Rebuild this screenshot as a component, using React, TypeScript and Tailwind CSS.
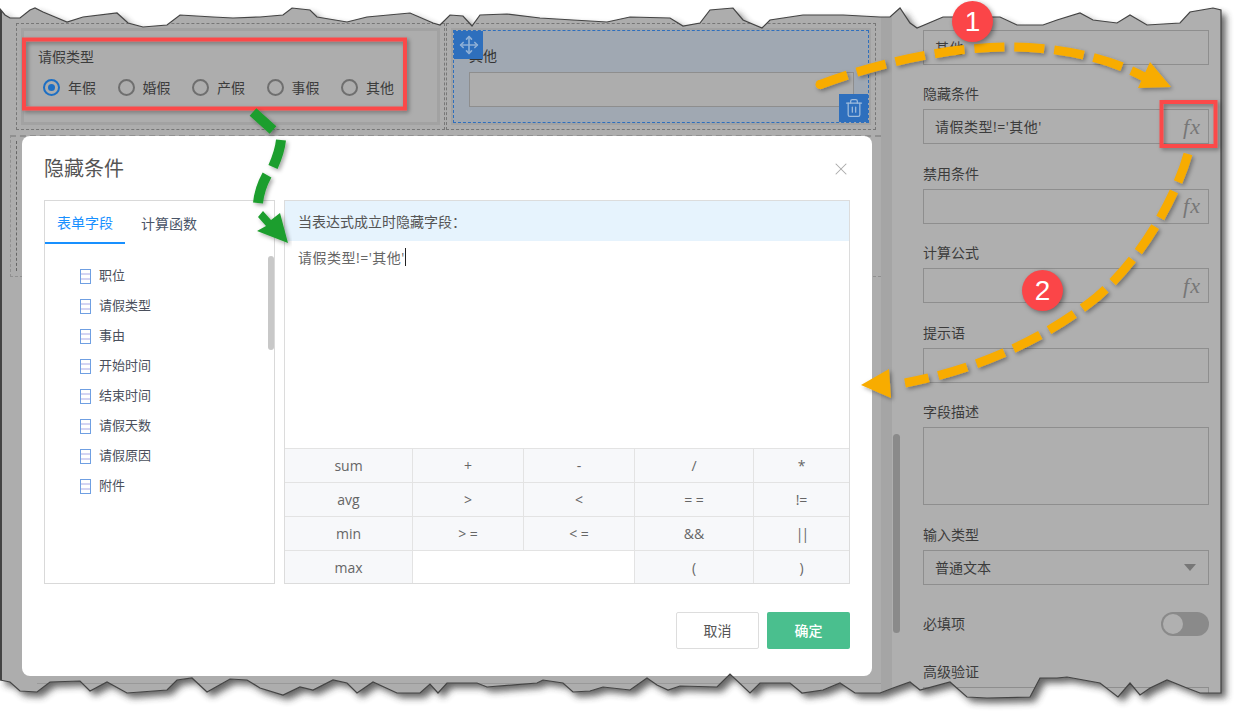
import React from 'react';
import { Move, Trash2, X } from 'lucide-react';

const radios = ['年假', '婚假', '产假', '事假', '其他'];
const fields = ['职位', '请假类型', '事由', '开始时间', '结束时间', '请假天数', '请假原因', '附件'];
const keys = [
  ['sum', '+', '-', '/', '*'],
  ['avg', '>', '<', '= =', '!='],
  ['min', '> =', '< =', '&&', '||'],
  ['max', '', '', '(', ')'],
];

// torn paper outline, traced from the picture
const edge =
  'M0 9 L5 15 L10 18 L20 18 L30 10 L35 8 L43 12 L55 17 L67 22 L83 17 L117 13 L128 23 L143 27 L167 25 L180 15 L213 17 L233 18 L260 17 L283 15 L292 8 L310 10 L317 17 L347 22 L367 17 L410 13 L433 23 L440 25 L450 15 L463 16 L472 26 L480 15 L507 14 L540 18 L573 20 L607 22 L630 17 L670 18 L683 26 L700 23 L710 10 L733 8 L743 20 L762 28 L770 20 L803 15 L843 15 L880 17 L890 17 L900 8 L910 23 L917 28 L943 17 L1000 17 L1017 25 L1043 25 L1057 20 L1080 13 L1093 20 L1117 23 L1130 15 L1147 25 L1180 23 L1190 12 L1213 8 L1221 10 L1221 693 L1200 693 L1187 688 L1167 680 L1150 688 L1140 695 L1130 683 L1118 697 L1100 683 L1067 677 L1057 678 L1040 678 L1030 697 L987 698 L967 697 L950 682 L920 690 L910 682 L893 688 L880 693 L855 693 L840 683 L823 690 L802 693 L790 683 L760 683 L750 693 L730 674 L717 687 L680 686 L668 690 L657 685 L647 678 L630 690 L603 687 L590 691 L573 692 L563 683 L543 680 L537 683 L487 687 L477 683 L447 683 L438 693 L430 684 L420 693 L397 693 L373 682 L357 693 L347 683 L333 680 L313 690 L300 687 L283 695 L260 688 L247 680 L230 679 L207 692 L192 678 L177 680 L167 690 L127 693 L107 682 L90 691 L80 681 L50 682 L37 692 L20 691 L10 682 L0 680 Z';

const cjk = "font-['Open_Sans','Noto_Sans_CJK_SC',sans-serif]";

function Fx() {
  return (
    <span className="font-['Liberation_Serif',serif] italic text-[22px] tracking-[1px] leading-none text-[#777]">fx</span>
  );
}

function Field({ label, value, fx, h = 'h-[35px]' }: { label: string; value?: string; fx?: boolean; h?: string }) {
  return (
    <div className="pb-[9.5px]">
      <div className="h-[35px] flex items-end pb-[5px] text-[14px] leading-5 text-[#3c3c3c]">{label}</div>
      <div className={`${h} border border-[#8e8e8e] flex items-center justify-between pl-[11px] pr-[7px] text-[14px] tracking-[0.5px] text-[#3c3c3c]`}>
        <span>{value}</span>
        {fx && <Fx />}
      </div>
    </div>
  );
}

function FieldIcon() {
  return (
    <svg width="11" height="15" viewBox="0 0 11 15" fill="none" stroke="#6f9fe2" strokeWidth="1">
      <rect x="0.5" y="0.5" width="10" height="14" />
      <path d="M1 5H10M1 10H10" stroke="#a9a9e6" />
    </svg>
  );
}

function App() {
  return (
    <div className={`relative w-[1237px] h-[720px] overflow-hidden bg-white ${cjk}`}>
      {/* the dimmed page behind the dialog */}
      <div className="w-[1221px] h-[720px] flex bg-[#adadad] border-l-2 border-[#444]">
        <div className="w-[879px] pt-[23px] pl-[14px]">
          <div className="flex gap-px">
            <div className="w-[429px] h-[107px] border border-dashed border-[#777] p-[4px]">
              <div className="h-full border-[3px] border-[#a2a2a2] pl-[14px] text-[#3c3c3c] text-[14px]">
                <div className="pt-[16px] leading-5">请假类型</div>
                <div className="flex mt-[10px]">
                  {radios.map((r, i) => (
                    <div key={r} className="w-[74.5px] flex items-center gap-[8px] h-5 ml-[5px] -mr-[5px]">
                      <span className={`w-[17px] h-[17px] rounded-full border-[2px] flex items-center justify-center ${i === 0 ? 'border-[#1d6fc4]' : 'border-[#6f6f6f]'}`}>
                        {i === 0 && <span className="w-[7px] h-[7px] rounded-full bg-[#1d6fc4]" />}
                      </span>
                      <span>{r}</span>
                    </div>
                  ))}
                </div>
              </div>
            </div>
            <div className="w-[430px] h-[107px] border border-dashed border-[#777] p-[4px]">
              <div className="h-full border-[2px] border-[#a2a2a2] bg-[#a0a8b2]">
                <div className="relative h-full border border-dashed border-[#2e6fbd] pl-[15px] text-[14px] text-[#333]">
                  <div className="pt-[15px] leading-5">其他</div>
                  <div className="mt-[6px] h-[35px] w-[385px] bg-[#adadad] border border-[#8e8e8e]" />
                  <div className="absolute left-0 top-0 w-[29px] h-[28px] bg-[#2e6fbd] flex items-center justify-center">
                    <Move size={20} strokeWidth={2} className="text-[#8fb0d6]" />
                  </div>
                  <div className="absolute right-0 bottom-0 w-[29px] h-[28px] bg-[#2e6fbd] flex items-center justify-center">
                    <Trash2 size={20} strokeWidth={1.5} className="text-[#9fbcdc]" />
                  </div>
                </div>
              </div>
            </div>
          </div>
          <div className="mt-[5px] -ml-[6px] w-[871px] h-[142px] border-t-2 border-b border-l border-dashed border-[#909090] pl-[5px] pt-[4px]">
            <div className="w-[300px] h-[130px] border-l border-dashed border-[#666]" />
          </div>
          <div className="mt-[406px] ml-[21px] h-px bg-[#999]" />
        </div>

        <div className="w-[11px] bg-[#a5a5a5]" />

        <div className="relative flex-1 pl-[31px] pr-[12px] bg-[#afafaf] overflow-hidden">
          <div className="absolute left-[1px] top-[434px] w-[7px] h-[199px] rounded-full bg-[#8a8a8a]" />
          <div className="-mt-[5.5px]">
            <Field label="" value="其他" />
            <Field label="隐藏条件" value="请假类型!='其他'" fx />
            <Field label="禁用条件" fx />
            <Field label="计算公式" fx />
            <Field label="提示语" />
            <Field label="字段描述" h="h-[78px]" />
            <div>
              <div className="h-[35px] flex items-end pb-[5px] text-[14px] leading-5 text-[#3c3c3c]">输入类型</div>
              <div className="h-[35px] border border-[#8e8e8e] flex items-center justify-between pl-[11px] pr-[12px] text-[14px] text-[#3c3c3c]">
                <span>普通文本</span>
                <span className="w-0 h-0 border-x-[6px] border-x-transparent border-t-[7px] border-t-[#777]" />
              </div>
            </div>
            <div className="flex items-center justify-between mt-[27px] h-[24px] text-[14px] text-[#3c3c3c]">
              <span>必填项</span>
              <span className="w-[48px] h-[24px] rounded-full bg-[#8a8a8a] p-[2px]">
                <span className="block w-[20px] h-[20px] rounded-full bg-[#b0b0b0]" />
              </span>
            </div>
            <div className="mt-[26px] leading-5 text-[14px] text-[#3c3c3c]">高级验证</div>
            <div className="mt-[5px] h-[35px] border border-[#8e8e8e]" />
          </div>
        </div>
      </div>

      {/* dialog */}
      <div className="absolute left-[22px] top-[136px] w-[850px] h-[540px] rounded-lg bg-white px-[22px]">
        <div className="h-[64px] pt-[1px] flex items-center justify-between">
          <span className="text-[20px] text-[#555]">隐藏条件</span>
          <X size={20} strokeWidth={1.25} className="text-[#aaa] -mr-[1px]" />
        </div>
        <div className="flex gap-[9px] h-[384px]">
          <div className="relative w-[231px] border border-[#d9d9d9]">
            <div className="flex h-[43px] pt-[1px] text-[14px] text-[#4a5568]">
              <div className="w-[80px] border-b-2 border-[#1890ff] text-[#1890ff] flex items-center justify-center">表单字段</div>
              <div className="pl-[16px] flex items-center">计算函数</div>
            </div>
            <div className="pt-[17px] pl-[35px]">
              {fields.map((f) => (
                <div key={f} className="h-[30px] flex items-center gap-[8px] text-[13px] text-[#4a4f5c]">
                  <FieldIcon />
                  <span>{f}</span>
                </div>
              ))}
            </div>
            <div className="absolute left-[223px] top-[55px] w-[6px] h-[94px] rounded-full bg-[#c8c8c8]" />
          </div>
          <div className="w-[566px] border border-[#dcdcdc] flex flex-col">
            <div className="h-[40px] bg-[#e6f3fd] pl-[13px] flex items-center text-[14px] text-[#555]">当表达式成立时隐藏字段：</div>
            <div className="h-[207px] pl-[13px] pt-[7px] flex items-start text-[14px] tracking-[0.5px] leading-5 text-[#666]">
              <span>请假类型!='其他'</span>
              <span className="w-px h-[18px] bg-[#222]" />
            </div>
            <div className="grid grid-cols-[128px_111px_111px_119px_1fr] border-t border-[#e3e3e3] text-[14px] text-[#666]">
              {keys.map((row, r) =>
                row.map((k, c) => (
                  <div
                    key={`${r}-${c}`}
                    className={`${r < 3 ? 'h-[34px] pb-[1px] border-b border-[#e3e3e3]' : 'h-[32px]'} flex items-center justify-center ${k ? 'bg-[#f7f8fa]' : 'bg-white'} ${c < 4 && !(r === 3 && c === 1) ? 'border-r border-[#e3e3e3]' : ''} ${k === '||' ? 'tracking-[-2px]' : ''}`}
                  >
                    {k}
                  </div>
                )),
              )}
            </div>
          </div>
        </div>
        <div className="mt-[28px] flex justify-end gap-[8px] text-[14px]">
          <button className="w-[83px] h-[37px] rounded-[2px] border border-[#ddd] bg-white text-[#555]">取消</button>
          <button className="w-[83px] h-[37px] rounded-[2px] bg-[#4abf8e] text-white font-medium">确定</button>
        </div>
      </div>

      {/* torn edge and callouts */}
      <svg className="absolute inset-0" width="1237" height="720" viewBox="0 0 1237 720" fill="none">
        <defs>
          <clipPath id="outside">
            <path clipRule="evenodd" d={`M0 0H1237V720H0Z ${edge}`} />
          </clipPath>
          <filter id="blur" x="-5%" y="-5%" width="110%" height="110%">
            <feGaussianBlur stdDeviation="3.5" />
          </filter>
          <filter id="soft" x="-10%" y="-10%" width="120%" height="120%">
            <feDropShadow dx="2" dy="2" stdDeviation="2" floodColor="#000" floodOpacity="0.35" />
          </filter>
        </defs>
        <path fillRule="evenodd" fill="#fff" d={`M0 0H1237V720H0Z ${edge}`} />
        <g clipPath="url(#outside)">
          <path d={edge} fill="#333" opacity="0.75" transform="translate(5 5)" filter="url(#blur)" />
        </g>
        <path d={edge} stroke="#444" strokeWidth="1.2" />

        <g filter="url(#soft)">
          <rect x="24" y="39.5" width="381" height="69" stroke="#fb4a4a" strokeWidth="4" />
          <rect x="1161.5" y="102" width="54" height="44" stroke="#fb4a4a" strokeWidth="4" />
        </g>
        <g filter="url(#soft)">
          <path d="M253 112 L273 130 M281 140 C280 150 277 158 273 167 M267 175 C262 184 259 193 258 203" stroke="#1e9e2d" strokeWidth="10" />
          <path d="M263 211 L271 220 L280 213 L288 243 L257 231 L266 226 L258 217 Z" fill="#1e9e2d" />
        </g>
        <g filter="url(#soft)">
          <path d="M819 85 C880 62 950 47 1010 47 C1060 47 1110 58 1146 78" stroke="#f8ac06" strokeWidth="9" strokeDasharray="30 10" />
          <circle cx="820" cy="84.5" r="4.5" fill="#f8ac06" />
          <path d="M1150 62 L1171 87 L1138 88 Z" fill="#f8ac06" />
          <path d="M1188 154 C1175 200 1140 260 1097 297 C1050 335 985 368 905 383" stroke="#f8ac06" strokeWidth="9" strokeDasharray="30 10" />
          <path d="M861 385 L889 369 L891 398 Z" fill="#f8ac06" />
        </g>
      </svg>

      <div className="absolute left-[952px] top-[1px] w-[41px] h-[41px] rounded-full bg-[#fb4548] shadow-[2px_2px_5px_rgba(0,0,0,0.4)] flex items-center justify-center text-white text-[28px] font-['Liberation_Sans',sans-serif]">1</div>
      <div className="absolute left-[1022px] top-[270px] w-[41px] h-[41px] rounded-full bg-[#fb4548] shadow-[2px_2px_5px_rgba(0,0,0,0.4)] flex items-center justify-center text-white text-[28px] font-['Liberation_Sans',sans-serif]">2</div>
    </div>
  );
}

export default App;
